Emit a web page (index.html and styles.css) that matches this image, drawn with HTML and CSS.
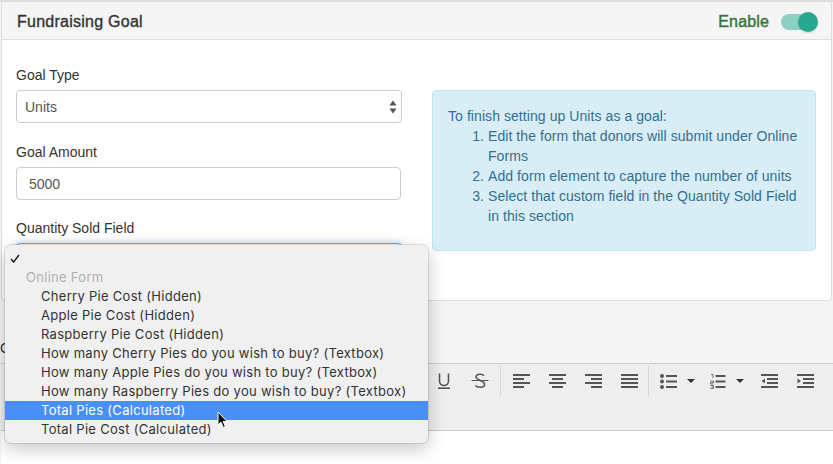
FILE: index.html
```html
<!DOCTYPE html>
<html lang="en">
<head>
<meta charset="utf-8">
<title>Fundraising Goal</title>
<link rel="stylesheet" href="styles.css">
</head>
<body>
<div class="page">
  <section class="panel">
    <header class="panel-head">
      <h2 class="panel-title">Fundraising Goal</h2>
      <div class="enable">
        <span class="enable-label">Enable</span>
        <span class="toggle"><span class="toggle-thumb"></span></span>
      </div>
    </header>
    <div class="panel-body">
      <div class="form-col">
        <div class="field">
          <label class="label">Goal Type</label>
          <div class="control select-control">Units
            <svg class="updown" width="8" height="14" viewBox="0 0 8 14"><path d="M4 0.5 L7.6 5.5 H0.4 Z M4 13.5 L7.6 8.5 H0.4 Z" fill="#555"/></svg>
          </div>
        </div>
        <div class="field field-tight">
          <label class="label">Goal Amount</label>
          <div class="control input-control">5000</div>
        </div>
        <div class="field">
          <label class="label">Quantity Sold Field</label>
          <div class="control focus-control"></div>
        </div>
      </div>
      <aside class="alert">
        <div>To finish setting up Units as a goal:</div>
        <ol class="alert-list">
          <li>Edit the form that donors will submit under Online Forms</li>
          <li>Add form element to capture the number of units</li>
          <li>Select that custom field in the Quantity Sold Field in this section</li>
        </ol>
      </aside>
    </div>
  </section>

  <div class="content-label">C</div>

  <div class="toolbar">
    <span class="tb"><svg width="14" height="16" viewBox="0 0 14 16"><path d="M2.5 0.5 V8 C2.5 14 11.5 14 11.5 8 V0.5" fill="none" stroke="#555" stroke-width="1.6"/><rect x="1" y="14.4" width="12" height="1.6" fill="#555"/></svg></span>
    <span class="tb"><svg width="18" height="16" viewBox="0 0 18 16"><path d="M13 2.8 C12 0.6 5 0.4 5 4 C5 7.2 13.6 7.4 13.6 11.4 C13.6 15 6 15 4.4 12.4" fill="none" stroke="#555" stroke-width="1.5"/><rect x="0.5" y="7" width="17" height="1" fill="#555"/></svg></span>
    <span class="sep sep-a"></span>
    <span class="tb"><svg width="17" height="14" viewBox="0 0 17 14"><path d="M0 0h17v2H0zM0 4h11v2H0zM0 8h17v2H0zM0 12h11v2H0z" fill="#555"/></svg></span>
    <span class="tb"><svg width="17" height="14" viewBox="0 0 17 14"><path d="M0 0h17v2H0zM3 4h11v2H3zM0 8h17v2H0zM3 12h11v2H3z" fill="#555"/></svg></span>
    <span class="tb"><svg width="17" height="14" viewBox="0 0 17 14"><path d="M0 0h17v2H0zM6 4h11v2H6zM0 8h17v2H0zM6 12h11v2H6z" fill="#555"/></svg></span>
    <span class="tb"><svg width="17" height="14" viewBox="0 0 17 14"><path d="M0 0h17v2H0zM0 4h17v2H0zM0 8h17v2H0zM0 12h17v2H0z" fill="#555"/></svg></span>
    <span class="sep sep-b"></span>
    <span class="tb tb-list"><svg width="17" height="15" viewBox="0 0 17 15"><circle cx="2" cy="2" r="2" fill="#555"/><circle cx="2" cy="7.5" r="2" fill="#555"/><circle cx="2" cy="13" r="2" fill="#555"/><path d="M6 1h11v2H6zM6 6.500h11v2H6zM6 12h11v2H6z" fill="#555"/></svg></span>
    <span class="caret"></span>
    <span class="tb tb-num"><svg width="16" height="15" viewBox="0 0 16 15"><path d="M1 0.500h2v3.500M0.500 7h3v1.500h-3v1.500h3M0.500 11.500h3v3h-3M1.500 13h2" fill="none" stroke="#555" stroke-width="0.8"/><path d="M5.500 1h10v2h-10zM5.500 6.500h10v2h-10zM5.500 12h10v2h-10z" fill="#555"/></svg></span>
    <span class="caret"></span>
    <span class="tb tb-out"><svg width="17" height="14" viewBox="0 0 17 14"><path d="M0 0h17v2H0zM6 4h11v2H6zM6 8h11v2H6zM0 12h17v2H0zM4 4.500v5L0.500 7z" fill="#555"/></svg></span>
    <span class="tb"><svg width="17" height="14" viewBox="0 0 17 14"><path d="M0 0h17v2H0zM6 4h11v2H6zM6 8h11v2H6zM0 12h17v2H0zM0.500 4.500v5L4 7z" fill="#555"/></svg></span>
  </div>
  <div class="editor"></div>

  <div class="menu">
    <div class="menu-check"><svg width="10" height="9" viewBox="0 0 10 9"><path d="M1 5 L3.600 8 L9 1" fill="none" stroke="#222" stroke-width="1.500"/></svg></div>
    <div class="menu-group">Online Form</div>
    <div class="menu-item">Cherry Pie Cost (Hidden)</div>
    <div class="menu-item">Apple Pie Cost (Hidden)</div>
    <div class="menu-item">Raspberry Pie Cost (Hidden)</div>
    <div class="menu-item">How many Cherry Pies do you wish to buy? (Textbox)</div>
    <div class="menu-item">How many Apple Pies do you wish to buy? (Textbox)</div>
    <div class="menu-item">How many Raspberry Pies do you wish to buy? (Textbox)</div>
    <div class="menu-item is-active">Total Pies (Calculated)</div>
    <div class="menu-item">Total Pie Cost (Calculated)</div>
  </div>
  <svg class="cursor" width="12" height="18" viewBox="0 0 12 18"><path d="M1 1 V14 L4 11.200 L6.200 16.500 L8.400 15.500 L6.200 10.500 H10.200 Z" fill="#111" stroke="#fff" stroke-width="1"/></svg>
</div>
</body>
</html>
```

FILE: styles.css
```css
* { box-sizing: border-box; }
html, body { margin: 0; padding: 0; }
body {
  background: #f4f4f4;
  font-family: "Liberation Sans", Arial, sans-serif;
  font-size: 14px;
  color: #333;
  overflow: hidden;
}
.page {
  position: relative;
  width: 833px;
  height: 464px;
  overflow: hidden;
  border-top: 2px solid #dedede;
  padding-left: 1px;
}
.panel {
  height: 299px;
  margin-right: 1px;
  background: #fff;
  border: 1px solid #ddd;
  border-top: 0;
  border-radius: 0 0 4px 4px;
}
.panel-head {
  height: 38px;
  display: flex;
  align-items: center;
  justify-content: space-between;
  padding: 2px 18px 0 15px;
  background: #f5f5f5;
  border-bottom: 1px solid #ddd;
}
.panel-title {
  margin: 0;
  font-size: 16px;
  font-weight: 400;
  letter-spacing: 0.25px;
  -webkit-text-stroke: 0.35px #333;
}
.enable { display: flex; align-items: center; gap: 12px; }
.enable-label {
  font-size: 16px;
  letter-spacing: 0.15px;
  color: #3c763d;
  -webkit-text-stroke: 0.45px #3c763d;
}
.toggle {
  position: relative;
  display: block;
  width: 32px;
  height: 16px;
  border-radius: 8px;
  background: #8dcfc1;
}
.toggle-thumb {
  position: absolute;
  top: -2px;
  right: -5px;
  width: 20px;
  height: 20px;
  border-radius: 50%;
  background: #26a98f;
  box-shadow: 0 1px 2px rgba(0,0,0,.15);
}
.panel-body {
  display: flex;
  gap: 30px;
  padding: 27px 15px 0 14px;
}
.form-col { width: 386px; flex: none; }
.field { margin-bottom: 15px; height: 62px; }
.field-tight { margin-bottom: 14px; }
.label { display: block; height: 23px; line-height: 16px; }
.control {
  position: relative;
  height: 33px;
  line-height: 33px;
  border: 1px solid #ccc;
  border-radius: 4px;
  background: #fff;
  color: #555;
}
.select-control { padding-left: 8px; }
.input-control { width: 385px; padding-left: 12px; }
.focus-control {
  border-color: #66afe9;
  box-shadow: 0 0 6px rgba(102,175,233,.6);
}
.updown { position: absolute; right: 4px; top: 9px; }
.alert {
  width: 385px;
  height: 161px;
  margin-top: 23px;
  padding: 15px;
  line-height: 20px;
  font-size: 14px;
  letter-spacing: 0.07px;
  color: #31708f;
  background: #d9edf7;
  border: 1px solid #bce8f1;
  border-radius: 4px;
}
.alert-list { margin: 0; padding-left: 40px; }
.content-label {
  height: 62px;
  padding-top: 39px;
  margin-left: -1px;
  line-height: 16px;
}
.toolbar {
  height: 68px;
  display: flex;
  align-items: flex-start;
  padding: 2px 0 0 425px;
  background: #eee;
  border-top: 1px solid #ccc;
  border-bottom: 1px solid #ccc;
}
.tb {
  flex: none;
  width: 36px;
  height: 30px;
  display: flex;
  align-items: center;
  justify-content: center;
}
.tb-list { width: 27px; margin-left: 10px; justify-content: flex-start; }
.tb-num { width: 26px; margin-left: 15px; justify-content: flex-start; }
.tb-out { margin-left: 7px; }
.sep {
  flex: none;
  width: 1px;
  height: 30px;
  background: #d6d6d6;
}
.sep-a { margin-left: 2px; margin-right: 2px; }
.sep-b { margin-left: 1px; margin-right: 1px; }
.caret {
  flex: none;
  width: 0;
  height: 0;
  margin-top: 13px;
  border-left: 4px solid transparent;
  border-right: 4px solid transparent;
  border-top: 4px solid #333;
}
.editor { height: 40px; background: #fff; }
.menu {
  position: absolute;
  left: 5px;
  top: 243px;
  width: 423px;
  height: 198px;
  padding: 4px 0;
  font-family: "Inter", "Liberation Sans", sans-serif;
  font-size: 13px;
  letter-spacing: 0.29px;
  line-height: 19px;
  color: #333;
  background: #f0f0f0;
  border-radius: 6px;
  box-shadow: 0 0 0 1px rgba(0,0,0,.1), 0 6px 18px rgba(0,0,0,.22);
}
.menu-check { height: 19px; padding: 5px 0 0 5px; line-height: 9px; }
.menu-group { height: 19px; padding-left: 21px; color: #b0b0b0; }
.menu-item { height: 19px; padding-left: 36px; white-space: nowrap; }
.is-active { background: #4a8ef8; color: #fff; }
.cursor { position: absolute; left: 217px; top: 409px; }
```
